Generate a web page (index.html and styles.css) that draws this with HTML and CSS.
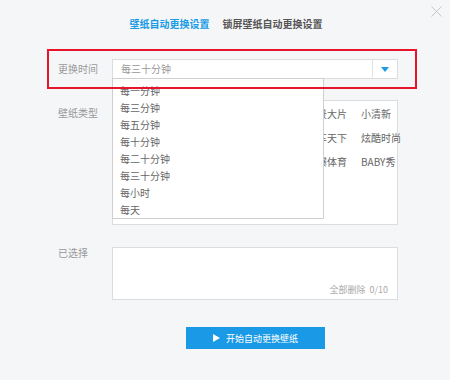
FILE: index.html
```html
<!DOCTYPE html>
<html lang="zh-CN">
<head>
    <meta charset="UTF-8">
    <title>壁纸自动更换设置</title>
    <link rel="stylesheet" href="styles.css">
</head>
<body>
    <div class="window">
        <svg class="close" width="11" height="11" viewBox="0 0 11 11">
            <path d="M0.5 0.5 L10.5 10.5 M10.5 0.5 L0.5 10.5" stroke="#c4c6ca" stroke-width="1" fill="none"/>
        </svg>

        <div class="tabs">
            <span class="tab active">壁纸自动更换设置</span>
            <span class="tab">锁屏壁纸自动更换设置</span>
        </div>

        <div class="form">
            <div class="row row-time">
                <div class="label">更换时间</div>
                <div class="select">
                    <div class="select-value">每三十分钟</div>
                    <div class="select-btn">
                        <svg width="8" height="5" viewBox="0 0 8 5"><path d="M0 0 H8 L4 5 Z" fill="#1a9be6"/></svg>
                    </div>
                    <ul class="dropdown">
                        <li>每一分钟</li>
                        <li>每三分钟</li>
                        <li>每五分钟</li>
                        <li>每十分钟</li>
                        <li>每二十分钟</li>
                        <li>每三十分钟</li>
                        <li>每小时</li>
                        <li>每天</li>
                    </ul>
                </div>
            </div>

            <div class="row row-type">
                <div class="label">壁纸类型</div>
                <div class="type-box">
                    <span>美女</span>
                    <span>动漫</span>
                    <span>游戏</span>
                    <span>风景大片</span>
                    <span>小清新</span>
                    <span>影视</span>
                    <span>萌宠</span>
                    <span>创意</span>
                    <span>汽车天下</span>
                    <span>炫酷时尚</span>
                    <span>军事</span>
                    <span>节日</span>
                    <span>文字</span>
                    <span>劲爆体育</span>
                    <span>BABY秀</span>
                </div>
            </div>

            <div class="row row-chosen">
                <div class="label">已选择</div>
                <div class="chosen-box">
                    <div class="chosen-foot">全部删除&nbsp;&nbsp;0/10</div>
                </div>
            </div>

            <div class="actions">
                <button class="start"><span class="play"></span>开始自动更换壁纸</button>
            </div>
        </div>
    </div>
</body>
</html>
```

FILE: styles.css
```css
body {
    margin: 0;
    background-color: #f5f6f8;
    font-family: "Noto Sans CJK SC", "Noto Sans", sans-serif;
    font-size: 10px;
    color: #666;
}
.window {
    position: relative;
    width: 450px;
    height: 380px;
}
.close {
    position: absolute;
    top: 6px;
    right: 8px;
}
.tabs {
    display: flex;
    justify-content: center;
    gap: 13px;
    padding-top: 18px;
    padding-left: 2px;
    line-height: 12px;
}
.tab {
    font-weight: bold;
    color: #555;
}
.tab.active {
    color: #1a9be6;
}
.form {
    margin: 19px 0 0 47px;
    width: 370px;
}
.row {
    display: flex;
    padding-left: 11px;
}
.label {
    width: 54px;
    color: #999;
    line-height: 12px;
}
.row-time {
    position: relative;
    z-index: 1;
    padding-top: 10px;
    padding-bottom: 10px;
    align-items: center;
}
.row-time::after {
    content: "";
    position: absolute;
    top: 0;
    left: 0;
    right: 0;
    bottom: 0;
    border: 2px solid #e8152a;
    z-index: 3;
}
.select {
    position: relative;
    display: flex;
    width: 286px;
    height: 20px;
    box-sizing: border-box;
    border: 1px solid #dcdcdc;
    background-color: #fff;
}
.select-value {
    flex: 1;
    padding-left: 8px;
    line-height: 18px;
    color: #999;
}
.select-btn {
    width: 24px;
    border-left: 1px solid #e2e2e2;
    display: flex;
    align-items: center;
    justify-content: center;
}
.dropdown {
    position: absolute;
    top: 18px;
    left: -1px;
    z-index: 2;
    width: 212px;
    height: 141px;
    box-sizing: border-box;
    margin: 0;
    padding: 3px 0 0 7px;
    list-style: none;
    background-color: #fff;
    border: 1px solid #cfcfcf;
    line-height: 17px;
}
.row-type {
    margin-top: 11px;
}
.row-type .label {
    padding-top: 7px;
}
.type-box {
    display: grid;
    grid-template-columns: repeat(5, 54px);
    align-content: start;
    width: 286px;
    height: 125px;
    box-sizing: border-box;
    padding: 1px 0 0 32px;
    background-color: #fff;
    border: 1px solid #dcdcdc;
    line-height: 24px;
}
.row-chosen {
    margin-top: 22px;
}
.chosen-box {
    display: flex;
    align-items: flex-end;
    justify-content: flex-end;
    width: 286px;
    height: 53px;
    box-sizing: border-box;
    padding: 0 9px 3px 0;
    background-color: #fff;
    border: 1px solid #dcdcdc;
}
.chosen-foot {
    font-size: 9px;
    line-height: 12px;
    color: #aaa;
}
.actions {
    display: flex;
    padding-left: 139px;
    margin-top: 27px;
}
.start {
    display: flex;
    align-items: center;
    justify-content: center;
    width: 139px;
    height: 22px;
    border: none;
    background-color: #1a9ae6;
    color: #fff;
    font-family: inherit;
    font-size: 9px;
    padding: 0;
}
.play {
    width: 0;
    height: 0;
    border-left: 7px solid #fff;
    border-top: 4px solid transparent;
    border-bottom: 4px solid transparent;
    margin-right: 6px;
}
```
